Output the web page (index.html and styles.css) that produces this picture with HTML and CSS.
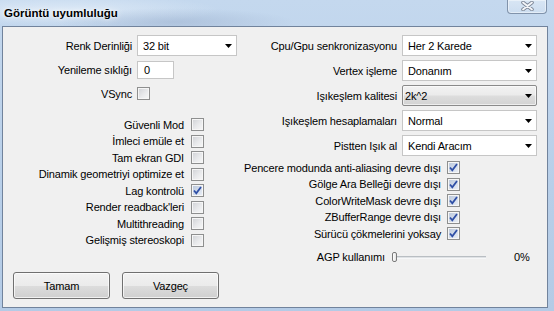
FILE: index.html
```html
<!DOCTYPE html>
<html lang="tr">
<head>
<meta charset="utf-8">
<title>Görüntü uyumluluğu</title>
<link rel="stylesheet" href="styles.css">
</head>
<body>
<div class="window">
  <div class="titlebar">
    <span class="title">Görüntü uyumluluğu</span>
    <div class="close">
      <svg width="13" height="10" viewBox="0 0 13 10"><path d="M2 1.5 L11 8.5 M11 1.5 L2 8.5" stroke="#7d8797" stroke-width="3.6" stroke-linecap="round" fill="none"/><path d="M2 1.5 L11 8.5 M11 1.5 L2 8.5" stroke="#f4f6f9" stroke-width="1.8" stroke-linecap="round" fill="none"/></svg>
    </div>
  </div>
  <div class="client">
    <div class="columns">
      <div class="col-left">
        <div class="lform">
          <div class="frow h21"><label class="llabel">Renk Derinliği</label><div class="select w100"><span>32 bit</span><svg class="arrow" width="7" height="4" viewBox="0 0 7 4"><polygon points="0,0 7,0 3.5,4" fill="#000"/></svg></div></div>
          <div class="frow h18 m5"><label class="llabel">Yenileme sıklığı</label><div class="input">0</div></div>
          <div class="frow h13 m8"><label class="llabel">VSync</label><span class="cb"></span></div>
        </div>
        <div class="checks lchecks">
          <div class="crow"><span class="clabel lcl">Güvenli Mod</span><span class="cb"></span></div>
          <div class="crow"><span class="clabel lcl">İmleci emüle et</span><span class="cb"></span></div>
          <div class="crow"><span class="clabel lcl">Tam ekran GDI</span><span class="cb"></span></div>
          <div class="crow"><span class="clabel lcl">Dinamik geometriyi optimize et</span><span class="cb"></span></div>
          <div class="crow"><span class="clabel lcl">Lag kontrolü</span><span class="cb on"><svg width="11" height="11" viewBox="0 0 11 11"><path d="M2 5.5 L4.3 8.3 L9 2" stroke="#2f4fa6" stroke-width="1.8" fill="none"/></svg></span></div>
          <div class="crow"><span class="clabel lcl">Render readback'leri</span><span class="cb"></span></div>
          <div class="crow"><span class="clabel lcl">Multithreading</span><span class="cb"></span></div>
          <div class="crow"><span class="clabel lcl">Gelişmiş stereoskopi</span><span class="cb"></span></div>
        </div>
      </div>
      <div class="col-right">
        <div class="rform">
          <div class="frow h21"><label class="rlabel">Cpu/Gpu senkronizasyonu</label><div class="select w135"><span>Her 2 Karede</span><svg class="arrow" width="7" height="4" viewBox="0 0 7 4"><polygon points="0,0 7,0 3.5,4" fill="#000"/></svg></div></div>
          <div class="frow h21"><label class="rlabel">Vertex işleme</label><div class="select w135"><span>Donanım</span><svg class="arrow" width="7" height="4" viewBox="0 0 7 4"><polygon points="0,0 7,0 3.5,4" fill="#000"/></svg></div></div>
          <div class="frow h21"><label class="rlabel">Işıkeşlem kalitesi</label><div class="select w135 combo"><span>2k^2</span><svg class="arrow" width="7" height="4" viewBox="0 0 7 4"><polygon points="0,0 7,0 3.5,4" fill="#000"/></svg></div></div>
          <div class="frow h21"><label class="rlabel">Işıkeşlem hesaplamaları</label><div class="select w135"><span>Normal</span><svg class="arrow" width="7" height="4" viewBox="0 0 7 4"><polygon points="0,0 7,0 3.5,4" fill="#000"/></svg></div></div>
          <div class="frow h21"><label class="rlabel">Pistten Işık al</label><div class="select w135"><span>Kendi Aracım</span><svg class="arrow" width="7" height="4" viewBox="0 0 7 4"><polygon points="0,0 7,0 3.5,4" fill="#000"/></svg></div></div>
        </div>
        <div class="checks rchecks">
          <div class="crow"><span class="clabel rcl">Pencere modunda anti-aliasing devre dışı</span><span class="cb on"><svg width="11" height="11" viewBox="0 0 11 11"><path d="M2 5.5 L4.3 8.3 L9 2" stroke="#2f4fa6" stroke-width="1.8" fill="none"/></svg></span></div>
          <div class="crow"><span class="clabel rcl">Gölge Ara Belleği devre dışı</span><span class="cb on"><svg width="11" height="11" viewBox="0 0 11 11"><path d="M2 5.5 L4.3 8.3 L9 2" stroke="#2f4fa6" stroke-width="1.8" fill="none"/></svg></span></div>
          <div class="crow"><span class="clabel rcl">ColorWriteMask devre dışı</span><span class="cb on"><svg width="11" height="11" viewBox="0 0 11 11"><path d="M2 5.5 L4.3 8.3 L9 2" stroke="#2f4fa6" stroke-width="1.8" fill="none"/></svg></span></div>
          <div class="crow"><span class="clabel rcl">ZBufferRange devre dışı</span><span class="cb on"><svg width="11" height="11" viewBox="0 0 11 11"><path d="M2 5.5 L4.3 8.3 L9 2" stroke="#2f4fa6" stroke-width="1.8" fill="none"/></svg></span></div>
          <div class="crow"><span class="clabel rcl">Sürücü çökmelerini yoksay</span><span class="cb on"><svg width="11" height="11" viewBox="0 0 11 11"><path d="M2 5.5 L4.3 8.3 L9 2" stroke="#2f4fa6" stroke-width="1.8" fill="none"/></svg></span></div>
        </div>
        <div class="agp">
          <span class="agp-label">AGP kullanımı</span>
          <div class="slider"><span class="thumb"></span><span class="track"></span></div>
          <span class="pct">0%</span>
        </div>
      </div>
    </div>
    <div class="buttons">
      <button class="btn w97">Tamam</button>
      <button class="btn w97">Vazgeç</button>
    </div>
  </div>
</div>
</body>
</html>
```

FILE: styles.css
```css
* { box-sizing: border-box; }

html, body {
  margin: 0;
  padding: 0;
}

body {
  width: 554px;
  height: 311px;
  overflow: hidden;
  font-family: "Liberation Sans", Arial, sans-serif;
  font-size: 11px;
  letter-spacing: -0.15px;
  color: #000;
}

.window {
  width: 554px;
  height: 311px;
  display: flex;
  flex-direction: column;
  background:
    radial-gradient(ellipse 120px 14px at 175px 22px, rgba(150,170,200,0.45), rgba(150,170,200,0) 100%),
    radial-gradient(ellipse 160px 16px at 60px 10px, rgba(230,240,250,0.7), rgba(230,240,250,0) 100%),
    linear-gradient(180deg, #c4d8ee 0%, #b8cfe9 60%, #b4cbe6 100%);
}

.titlebar {
  height: 26px;
  flex: none;
  display: flex;
  justify-content: space-between;
  align-items: flex-start;
}

.title {
  font-size: 11.5px;
  font-weight: bold;
  letter-spacing: 0;
  line-height: 26px;
  padding-left: 4px;
  color: #000;
  text-shadow: 0 0 6px rgba(255,255,255,0.9), 0 0 3px rgba(255,255,255,0.8);
}

.close {
  width: 40px;
  height: 14px;
  margin-right: 7px;
  border: 1px solid #8193ab;
  border-top: none;
  border-radius: 0 0 4px 4px;
  background: linear-gradient(180deg, rgba(255,255,255,0.35), rgba(255,255,255,0.15));
  box-shadow: inset 0 0 0 1px rgba(255,255,255,0.45);
  display: flex;
  justify-content: center;
  align-items: flex-start;
  padding-top: 1px;
}

.client {
  margin-left: 2px;
  width: 546px;
  height: 282px;
  border: 1px solid #71839c;
  background: #f0f0f0;
  flex: none;
}

.columns {
  display: flex;
  align-items: flex-start;
}

.col-left {
  width: 237px;
  flex: none;
}

.col-right {
  flex: 1;
}

.lform, .rform {
  padding-top: 8px;
}

.rform {
  display: flex;
  flex-direction: column;
  gap: 4px;
}

.frow {
  display: flex;
  align-items: center;
}

.h21 { height: 21px; }
.h18 { height: 18px; }
.h13 { height: 13px; }
.m5 { margin-top: 5px; }
.m8 { margin-top: 8px; }

.llabel {
  width: 129px;
  margin-right: 5px;
  text-align: right;
  white-space: nowrap;
}

.rlabel {
  width: 157px;
  margin-right: 5px;
  text-align: right;
  white-space: nowrap;
}

.select {
  height: 21px;
  background: #fff;
  border: 1px solid #c6c6c6;
  display: flex;
  align-items: center;
  justify-content: space-between;
  padding-left: 5px;
  padding-right: 4px;
}

.w100 { width: 100px; }
.w135 { width: 135px; }

.select.combo {
  border: 1px solid #8a8a8a;
  border-radius: 2px;
  padding-left: 2px;
  background: linear-gradient(180deg, #f2f2f2 0%, #ebebeb 48%, #dddddd 52%, #d2d2d2 100%);
  box-shadow: inset 0 0 0 1px rgba(255,255,255,0.6);
}

.arrow {
  flex: none;
}

.input {
  width: 37px;
  height: 18px;
  background: #fff;
  border: 1px solid #c6c6c6;
  padding-left: 6px;
  line-height: 16px;
}

.cb {
  width: 13px;
  height: 13px;
  flex: none;
  border: 1px solid #8e8f8f;
  background: linear-gradient(135deg, #cfd1d5 0%, #e9eaec 55%, #f8f8f8 100%);
  box-shadow: inset 0 0 0 1px #f6f6f6;
  display: flex;
  align-items: center;
  justify-content: center;
}

.cb.on {
  background: linear-gradient(135deg, #b9c6da 0%, #d4ddeb 55%, #eef2f8 100%);
}

.checks {
  display: flex;
  flex-direction: column;
}

.lchecks {
  margin-top: 18px;
  gap: 3.57px;
}

.rchecks {
  margin-top: 5px;
  gap: 3.5px;
}

.crow {
  display: flex;
  align-items: center;
  height: 13px;
}

.clabel {
  text-align: right;
  white-space: nowrap;
}

.lcl {
  width: 181px;
  margin-right: 7px;
}

.rcl {
  width: 201px;
  margin-right: 6px;
}

.agp {
  margin-top: 11px;
  height: 12px;
  display: flex;
  align-items: center;
}

.agp-label {
  width: 145px;
  margin-right: 7px;
  text-align: right;
  white-space: nowrap;
}

.slider {
  width: 94px;
  height: 12px;
  display: flex;
  align-items: center;
}

.thumb {
  width: 5px;
  height: 10px;
  flex: none;
  border: 1px solid #7a7a7a;
  border-radius: 2px;
  background: linear-gradient(90deg, #ffffff, #e4e4e4);
}

.track {
  flex: 1;
  height: 3px;
  background: linear-gradient(180deg, #b9bec3 0 1px, #dfe2e5 1px 2px, #f6f7f8 2px);
}

.pct {
  margin-left: 28px;
}

.buttons {
  display: flex;
  gap: 12px;
  padding-left: 10px;
  margin-top: 9px;
}

.btn {
  height: 27px;
  font-family: "Liberation Sans", Arial, sans-serif;
  font-size: 11px;
  letter-spacing: -0.15px;
  color: #000;
  border: 1px solid #707070;
  border-radius: 3px;
  background: linear-gradient(180deg, #f2f2f2 0%, #ebebeb 50%, #dddddd 50%, #cfcfcf 100%);
  box-shadow: inset 0 0 0 1px rgba(255,255,255,0.7);
  padding: 0;
}

.w97 { width: 97px; }
```
